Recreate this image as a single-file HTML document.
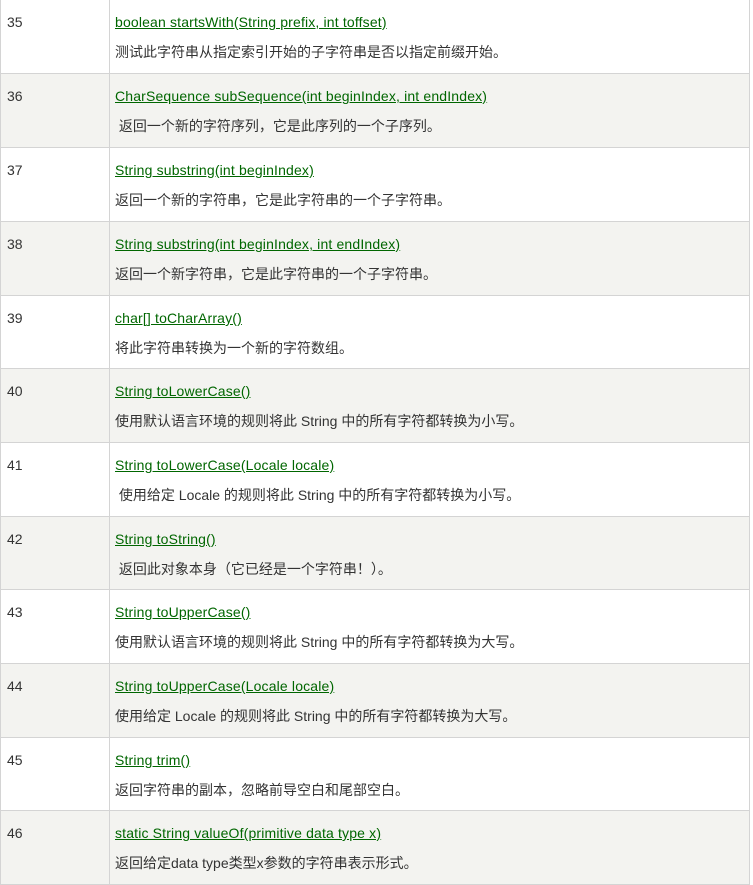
<!DOCTYPE html>
<html><head><meta charset="utf-8"><style>
body{margin:0;width:753px;height:878px;overflow:hidden;background:#fff;font-family:"Liberation Sans","Noto Sans CJK SC",sans-serif;font-size:14px;color:#333}
.r{position:absolute;left:0;width:748px;border-left:1px solid #d4d4d4;border-right:1px solid #d4d4d4;border-bottom:1px solid #d4d4d4}
.g{background:#f3f3f0}
span{line-height:16px}
.n{position:absolute;left:6px;top:14px}
.c{position:absolute;left:108px;top:0;bottom:0;border-left:1px solid #d4d4d4}
.l{position:absolute;left:114px;top:14px;color:#060;text-decoration:underline;letter-spacing:0.16px}
.d{position:absolute;left:114px;top:44px}
</style></head><body>
<div class="r" style="top:-1px;height:74px"><span class="n" style="top:15px">35</span><div class="c"></div><span class="l" style="top:15px">boolean startsWith(String prefix, int toffset)</span><span class="d" style="top:45px">测试此字符串从指定索引开始的子字符串是否以指定前缀开始。</span></div>
<div class="r g" style="top:74px;height:73px"><span class="n">36</span><div class="c"></div><span class="l">CharSequence subSequence(int beginIndex, int endIndex)</span><span class="d">&nbsp;返回一个新的字符序列，它是此序列的一个子序列。</span></div>
<div class="r" style="top:148px;height:73px"><span class="n">37</span><div class="c"></div><span class="l">String substring(int beginIndex)</span><span class="d">返回一个新的字符串，它是此字符串的一个子字符串。</span></div>
<div class="r g" style="top:222px;height:73px"><span class="n">38</span><div class="c"></div><span class="l">String substring(int beginIndex, int endIndex)</span><span class="d">返回一个新字符串，它是此字符串的一个子字符串。</span></div>
<div class="r" style="top:296px;height:72px"><span class="n">39</span><div class="c"></div><span class="l">char[] toCharArray()</span><span class="d">将此字符串转换为一个新的字符数组。</span></div>
<div class="r g" style="top:369px;height:73px"><span class="n">40</span><div class="c"></div><span class="l">String toLowerCase()</span><span class="d">使用默认语言环境的规则将此 String 中的所有字符都转换为小写。</span></div>
<div class="r" style="top:443px;height:73px"><span class="n">41</span><div class="c"></div><span class="l">String toLowerCase(Locale locale)</span><span class="d">&nbsp;使用给定 Locale 的规则将此 String 中的所有字符都转换为小写。</span></div>
<div class="r g" style="top:517px;height:72px"><span class="n">42</span><div class="c"></div><span class="l">String toString()</span><span class="d">&nbsp;返回此对象本身（它已经是一个字符串！）。</span></div>
<div class="r" style="top:590px;height:73px"><span class="n">43</span><div class="c"></div><span class="l">String toUpperCase()</span><span class="d">使用默认语言环境的规则将此 String 中的所有字符都转换为大写。</span></div>
<div class="r g" style="top:664px;height:73px"><span class="n">44</span><div class="c"></div><span class="l">String toUpperCase(Locale locale)</span><span class="d">使用给定 Locale 的规则将此 String 中的所有字符都转换为大写。</span></div>
<div class="r" style="top:738px;height:72px"><span class="n">45</span><div class="c"></div><span class="l">String trim()</span><span class="d">返回字符串的副本，忽略前导空白和尾部空白。</span></div>
<div class="r g" style="top:811px;height:73px"><span class="n">46</span><div class="c"></div><span class="l">static String valueOf(primitive data type x)</span><span class="d">返回给定data type类型x参数的字符串表示形式。</span></div>
</body></html>
